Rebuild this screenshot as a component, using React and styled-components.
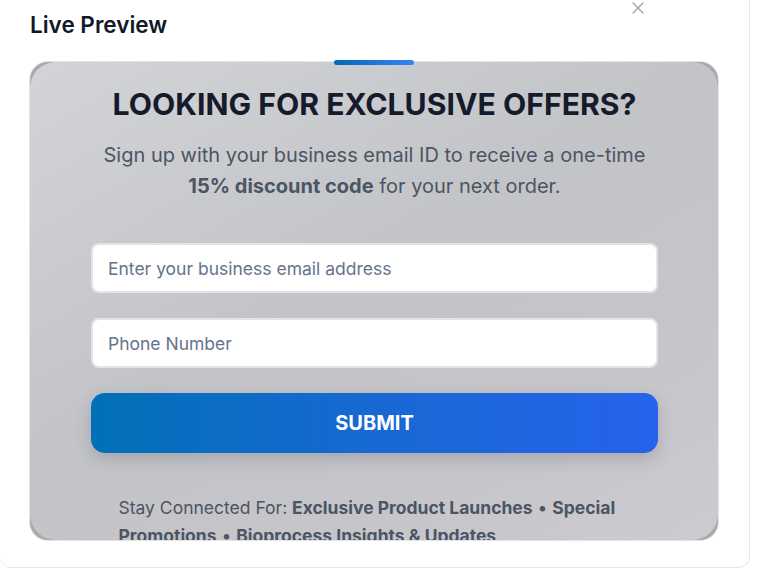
import React from 'react';
import styled, { createGlobalStyle } from 'styled-components';

const Global = createGlobalStyle`
  html, body { margin: 0; padding: 0; background: #ffffff; }
  body { font-family: Inter, "Noto Sans", sans-serif; overflow: hidden; }
`;

const Modal = styled.div`
  position: relative;
  box-sizing: border-box;
  width: 750px;
  height: 568px;
  background: #ffffff;
  border-right: 1px solid #e5e7eb;
  border-bottom: 1px solid #e5e7eb;
  border-radius: 0 0 12px 12px;
  padding: 10px 31px 0 30px;
`;

const Close = styled.button`
  position: absolute;
  top: 1px;
  left: 631px;
  width: 14px;
  height: 14px;
  padding: 0;
  border: none;
  background: none;
  color: #9ca3af;
  display: flex;
`;

const Title = styled.h2`
  margin: 0;
  font-size: 22.5px;
  line-height: 30px;
  font-weight: 600;
  color: #111827;
`;

const Frame = styled.div`
  position: relative;
  margin-top: 22px;
  height: 478px;
  border-radius: 18px;
  background: #a9a9ac;
  box-shadow: 0 0 0 1px #e4e4e6;
`;

const Accent = styled.div`
  position: absolute;
  top: -2px;
  left: 50%;
  transform: translateX(-50%);
  width: 80px;
  height: 5px;
  border-radius: 3px;
  background: linear-gradient(90deg, #0369b4, #3b82f6);
  z-index: 2;
`;

const Card = styled.div`
  height: 100%;
  box-sizing: border-box;
  border-radius: 26px;
  overflow: hidden;
  background: linear-gradient(150deg, #d2d4d8 0%, #c3c4c8 45%, #c6c5ca 75%, #cdcbd0 100%);
  padding: 23px 60px 0 61px;
  display: flex;
  flex-direction: column;
  align-items: center;
`;

const Heading = styled.h1`
  margin: 0;
  font-size: 30.2px;
  line-height: 38px;
  font-weight: 700;
  color: #151b2b;
  text-align: center;
  white-space: nowrap;
`;

const Lead = styled.p`
  margin: 17px 0 0;
  font-size: 20px;
  line-height: 31px;
  color: #4b5563;
  text-align: center;
  white-space: nowrap;
  b { font-weight: 700; }
`;

const Form = styled.form`
  align-self: stretch;
  margin-top: 41px;
  display: flex;
  flex-direction: column;
  gap: 25px;
`;

const Field = styled.input`
  box-sizing: border-box;
  height: 50px;
  width: 100%;
  border: 2px solid #e2e4e8;
  border-radius: 8px;
  background: #ffffff;
  padding: 0 15px;
  font-family: inherit;
  font-size: 17.5px;
  color: #111827;
  &::placeholder { color: #64748b; }
`;

const Submit = styled.button`
  height: 60px;
  border: none;
  border-radius: 14px;
  background: linear-gradient(90deg, #0170b7 0%, #1b67d8 60%, #2563eb 100%);
  color: #ffffff;
  font-family: inherit;
  font-size: 20px;
  font-weight: 700;
  box-shadow: 0 6px 16px rgba(60, 60, 80, 0.22);
`;

const Footer = styled.p`
  width: 512px;
  margin: 41px 0 0;
  font-size: 17.5px;
  line-height: 28px;
  color: #4b5563;
  b { font-weight: 700; }
`;

export default function App() {
  return (
    <>
      <Global />
      <Modal>
        <Close aria-label="Close">
          <svg width="14" height="14" viewBox="0 0 14 14" fill="none" stroke="currentColor" strokeWidth="1.4" strokeLinecap="round">
            <path d="M2 2l10 10M12 2L2 12" />
          </svg>
        </Close>
        <Title>Live Preview</Title>
        <Frame>
          <Accent />
          <Card>
            <Heading>LOOKING FOR EXCLUSIVE OFFERS?</Heading>
            <Lead>
              Sign up with your business email ID to receive a one-time<br />
              <b>15% discount code</b> for your next order.
            </Lead>
            <Form onSubmit={(e) => e.preventDefault()}>
              <Field type="email" placeholder="Enter your business email address" />
              <Field type="tel" placeholder="Phone Number" />
              <Submit type="submit">SUBMIT</Submit>
            </Form>
            <Footer>
              Stay Connected For: <b>Exclusive Product Launches</b> • <b>Special Promotions</b> • <b>Bioprocess Insights &amp; Updates</b>
            </Footer>
          </Card>
        </Frame>
      </Modal>
    </>
  );
}
